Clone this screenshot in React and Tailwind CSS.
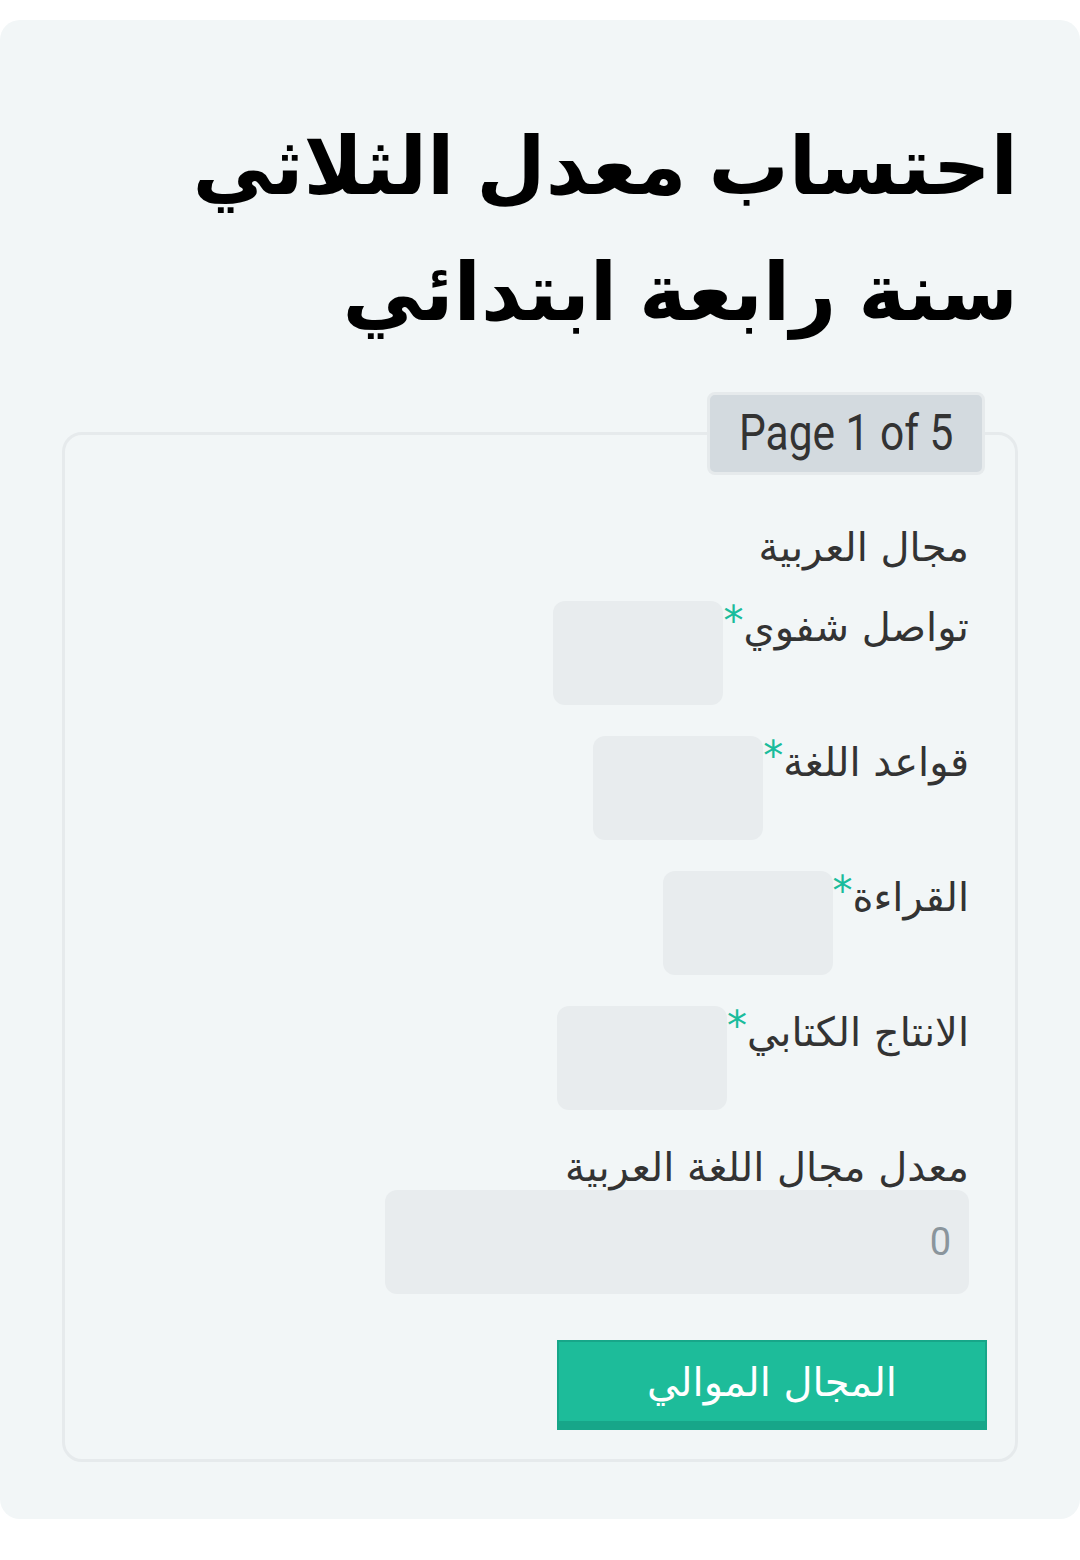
const AR = "font-['DejaVu_Sans','Noto_Sans',sans-serif]"

function Field({ label, width = 'w-[170px]' }) {
  return (
    <div className="flex items-start">
      <span className="text-[40px] leading-[52px] text-[#333]">{label}</span>
      <span className="text-[40px] leading-[40px] text-[#1abc9c] font-['DejaVu_Sans',sans-serif]">*</span>
      <div className={`${width} h-[104px] rounded-xl bg-[#e8ecee]`} />
    </div>
  )
}

export default function App() {
  return (
    <div dir="rtl" className="min-h-[1560px] bg-white pt-[20px]">
      <div className={`${AR} rounded-[20px] bg-[#f2f6f7] px-[62px] pt-[84px] pb-[57px]`}>
        <h1 className="text-[80px] font-bold leading-[126px] text-black [word-spacing:-6px]">
          احتساب معدل الثلاثي
          <br />
          سنة رابعة ابتدائي
        </h1>

        <fieldset className="mt-[36px] rounded-[20px] border-[3px] border-[#e6eaec] px-0 pb-[29px]">
          <legend className="mr-[30px] rounded-lg border-[3px] border-[#e6eaec] bg-[#d3dadf] px-[10px] text-[50px] leading-[77px] text-[#333] font-['Roboto',sans-serif]">
            <span className="inline-block scale-x-[0.85]">Page 1 of 5</span>
          </legend>

          <div className="pr-[46px] pl-[60px]">
            <div className="mt-[46px] text-[40px] leading-[52px] text-[#333]">مجال العربية</div>

            <div className="mt-[28px] flex flex-col gap-[31px]">
              <Field label="تواصل شفوي" />
              <Field label="قواعد اللغة" />
              <Field label="القراءة" />
              <Field label="الانتاج الكتابي" />
            </div>

            <div className="mt-[34px] text-[40px] leading-[46px] text-[#333]">معدل مجال اللغة العربية</div>
            <div className="w-[584px] h-[104px] rounded-xl bg-[#e8ecee] flex items-center pr-[18px] text-[38px] text-[#8a959c] font-['Roboto',sans-serif]">0</div>

            <div className="mt-[46px] -mr-[18px] flex">
              <button className="w-[430px] h-[90px] border-2 border-b-[9px] border-[#17a689] bg-[#1dbc9a] text-[40px] leading-[40px] text-white">
                المجال الموالي
              </button>
            </div>
          </div>
        </fieldset>
      </div>
    </div>
  )
}
